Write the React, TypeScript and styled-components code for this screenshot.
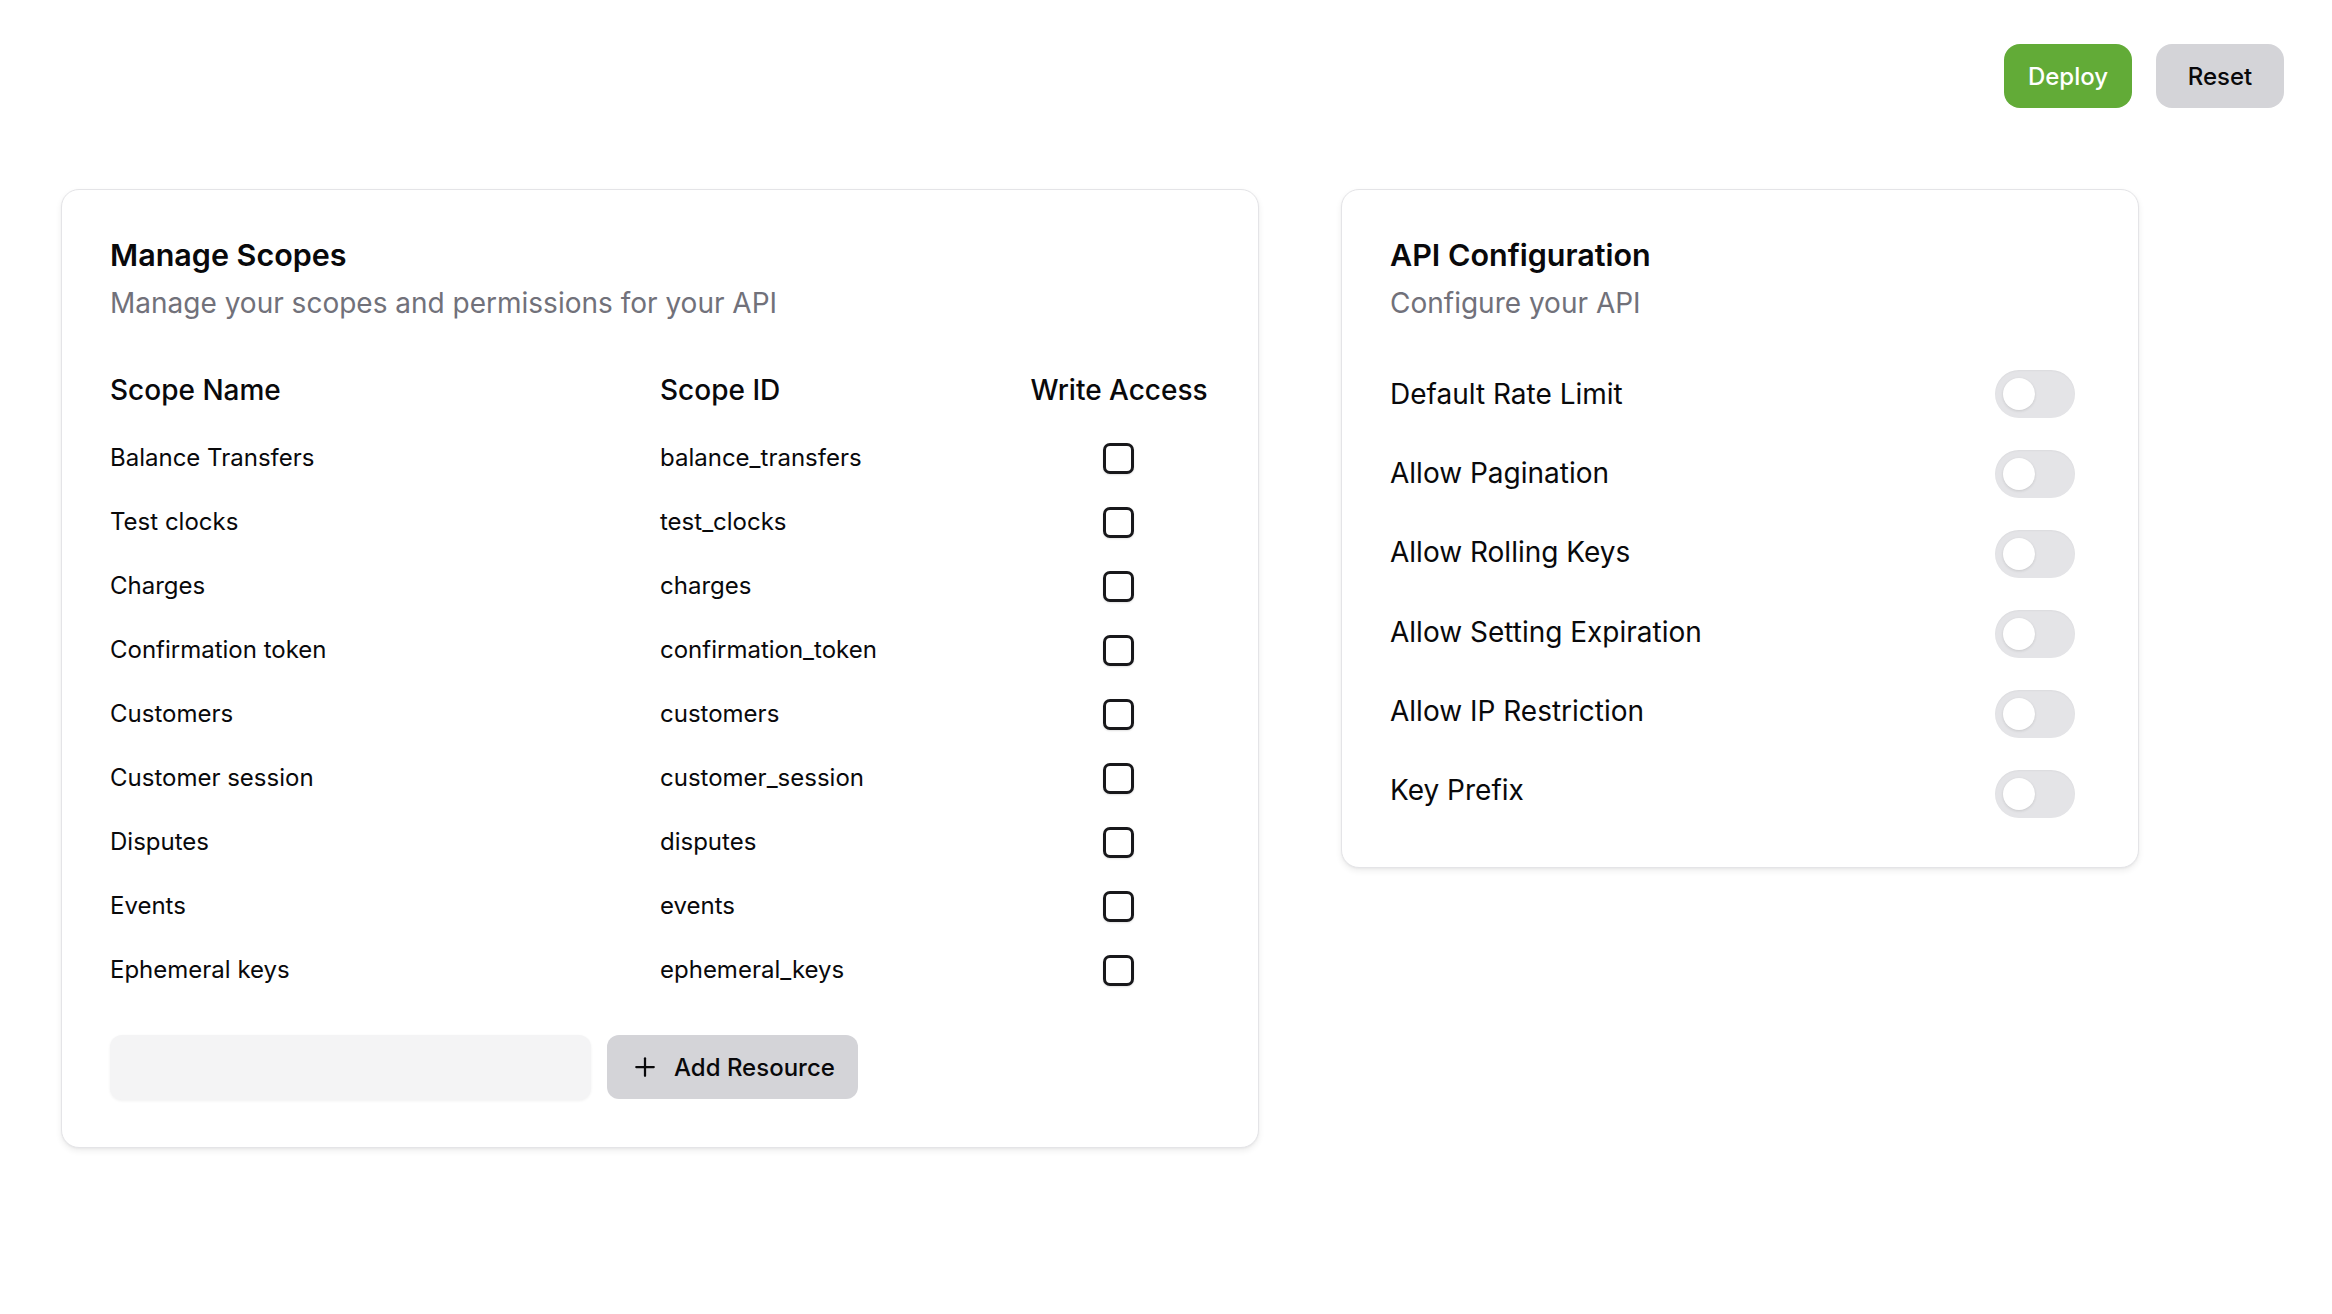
import React, { useState } from 'react';
import styled, { createGlobalStyle } from 'styled-components';
import { Plus } from 'lucide-react';

const GlobalStyle = createGlobalStyle`
  html, body {
    margin: 0;
    padding: 0;
    background: #ffffff;
  }
  body {
    font-family: Inter, "Noto Sans", "Liberation Sans", sans-serif;
    color: #09090b;
    -webkit-font-smoothing: antialiased;
  }
  * {
    box-sizing: border-box;
  }
`;

const Page = styled.div`
  width: 2332px;
  min-height: 1314px;
`;

const TopBar = styled.div`
  display: flex;
  justify-content: flex-end;
  gap: 24px;
  padding: 44px 48px 0 0;
`;

const ActionButton = styled.button<{ $variant: 'primary' | 'secondary' }>`
  width: 128px;
  height: 64px;
  border: none;
  border-radius: 16px;
  font-family: inherit;
  font-size: 24px;
  font-weight: 500;
  cursor: pointer;
  background: ${({ $variant }) => ($variant === 'primary' ? '#62ab37' : '#d4d4d8')};
  color: ${({ $variant }) => ($variant === 'primary' ? '#ffffff' : '#09090b')};
`;

const Columns = styled.div`
  display: grid;
  grid-template-columns: 1198px 798px;
  column-gap: 82px;
  align-items: start;
  margin-top: 81px;
  padding-left: 61px;
`;

const Card = styled.section<{ $bottom: number }>`
  background: #ffffff;
  border: 1.5px solid #e4e4e7;
  border-radius: 18px;
  box-shadow: 0 3px 6px rgba(0, 0, 0, 0.07), 0 1px 2px rgba(0, 0, 0, 0.04);
  padding: 46.5px 48px ${({ $bottom }) => $bottom}px 48px;
`;

const CardTitle = styled.h2`
  margin: 0;
  font-size: 30.5px;
  line-height: 36px;
  font-weight: 600;
  color: #09090b;
`;

const CardSubtitle = styled.p`
  margin: 10px 0 0;
  font-size: 28px;
  line-height: 40px;
  font-weight: 400;
  color: #71717a;
`;

const ScopeTable = styled.div`
  margin-top: 47px;
`;

const ScopeGrid = styled.div`
  display: grid;
  grid-template-columns: 550px 370.5px 1fr;
  align-items: center;
`;

const HeaderRow = styled(ScopeGrid)`
  height: 40px;
  margin-bottom: 16.5px;
`;

const HeaderCell = styled.div`
  font-size: 28px;
  line-height: 40px;
  font-weight: 500;
  white-space: nowrap;
  color: #09090b;
`;

const ScopeRow = styled(ScopeGrid)`
  height: 64px;
`;

const Cell = styled.div`
  font-size: 24px;
  line-height: 32px;
  font-weight: 400;
  color: #09090b;
`;

const CheckCell = styled.div`
  display: flex;
  padding-left: 72.5px;
`;

const CheckBox = styled.button<{ $checked: boolean }>`
  width: 31px;
  height: 31px;
  padding: 0;
  border: 3px solid #18181b;
  border-radius: 7px;
  background: ${({ $checked }) => ($checked ? '#18181b' : '#ffffff')};
  box-shadow: 0 1px 2px rgba(0, 0, 0, 0.12);
  cursor: pointer;
`;

const Footer = styled.div`
  display: flex;
  gap: 16px;
  margin-top: 33px;
`;

const ResourceInput = styled.input`
  width: 481px;
  height: 65px;
  border: none;
  border-radius: 12px;
  background: #f4f4f5;
  box-shadow: 0 1px 3px rgba(0, 0, 0, 0.06);
  padding: 0 20px;
  font-family: inherit;
  font-size: 24px;
  outline: none;
`;

const AddButton = styled.button`
  display: flex;
  align-items: center;
  gap: 14px;
  height: 64px;
  width: 251px;
  padding: 0 20px 0 23px;
  border: none;
  border-radius: 12px;
  background: #d4d4d8;
  font-family: inherit;
  font-size: 24px;
  font-weight: 500;
  color: #09090b;
  white-space: nowrap;
  cursor: pointer;
`;

const ToggleList = styled.div`
  display: flex;
  flex-direction: column;
  gap: 32px;
  margin-top: 47px;
`;

const ToggleRow = styled.div`
  display: flex;
  align-items: center;
  justify-content: space-between;
  height: 48px;
`;

const ToggleLabel = styled.span<{ $index: number }>`
  font-size: 28px;
  font-weight: 400;
  color: #09090b;
  transform: translateY(${({ $index }) => -$index * 0.8}px);
`;

const Switch = styled.button<{ $on: boolean }>`
  position: relative;
  width: 80px;
  height: 48px;
  margin-right: 15.5px;
  padding: 0;
  border: none;
  border-radius: 24px;
  background: ${({ $on }) => ($on ? '#62ab37' : '#e4e4e7')};
  box-shadow: inset 0 1px 2px rgba(0, 0, 0, 0.04);
  cursor: pointer;
`;

const Thumb = styled.span<{ $on: boolean }>`
  position: absolute;
  top: 8px;
  left: ${({ $on }) => ($on ? '40px' : '8px')};
  width: 32px;
  height: 32px;
  border-radius: 50%;
  background: #ffffff;
  box-shadow: 0 1px 3px rgba(0, 0, 0, 0.12);
`;

const scopes = [
  ['Balance Transfers', 'balance_transfers'],
  ['Test clocks', 'test_clocks'],
  ['Charges', 'charges'],
  ['Confirmation token', 'confirmation_token'],
  ['Customers', 'customers'],
  ['Customer session', 'customer_session'],
  ['Disputes', 'disputes'],
  ['Events', 'events'],
  ['Ephemeral keys', 'ephemeral_keys'],
];

const settings = [
  'Default Rate Limit',
  'Allow Pagination',
  'Allow Rolling Keys',
  'Allow Setting Expiration',
  'Allow IP Restriction',
  'Key Prefix',
];

export default function App() {
  const [checked, setChecked] = useState<Record<string, boolean>>({});
  const [toggles, setToggles] = useState<Record<string, boolean>>({});
  const [resource, setResource] = useState('');

  return (
    <Page>
      <GlobalStyle />
      <TopBar>
        <ActionButton $variant="primary">Deploy</ActionButton>
        <ActionButton $variant="secondary">Reset</ActionButton>
      </TopBar>

      <Columns>
        <Card $bottom={46.5}>
          <CardTitle>Manage Scopes</CardTitle>
          <CardSubtitle>Manage your scopes and permissions for your API</CardSubtitle>

          <ScopeTable>
            <HeaderRow>
              <HeaderCell>Scope Name</HeaderCell>
              <HeaderCell>Scope ID</HeaderCell>
              <HeaderCell>Write Access</HeaderCell>
            </HeaderRow>
            {scopes.map(([name, id]) => (
              <ScopeRow key={id}>
                <Cell>{name}</Cell>
                <Cell>{id}</Cell>
                <CheckCell>
                  <CheckBox
                    $checked={!!checked[id]}
                    onClick={() => setChecked({ ...checked, [id]: !checked[id] })}
                  />
                </CheckCell>
              </ScopeRow>
            ))}
          </ScopeTable>

          <Footer>
            <ResourceInput value={resource} onChange={(e) => setResource(e.target.value)} />
            <AddButton>
              <Plus size={30} strokeWidth={1.8} />
              Add Resource
            </AddButton>
          </Footer>
        </Card>

        <Card $bottom={49.5}>
          <CardTitle>API Configuration</CardTitle>
          <CardSubtitle>Configure your API</CardSubtitle>

          <ToggleList>
            {settings.map((label, i) => (
              <ToggleRow key={label}>
                <ToggleLabel $index={i}>{label}</ToggleLabel>
                <Switch
                  $on={!!toggles[label]}
                  onClick={() => setToggles({ ...toggles, [label]: !toggles[label] })}
                >
                  <Thumb $on={!!toggles[label]} />
                </Switch>
              </ToggleRow>
            ))}
          </ToggleList>
        </Card>
      </Columns>
    </Page>
  );
}
